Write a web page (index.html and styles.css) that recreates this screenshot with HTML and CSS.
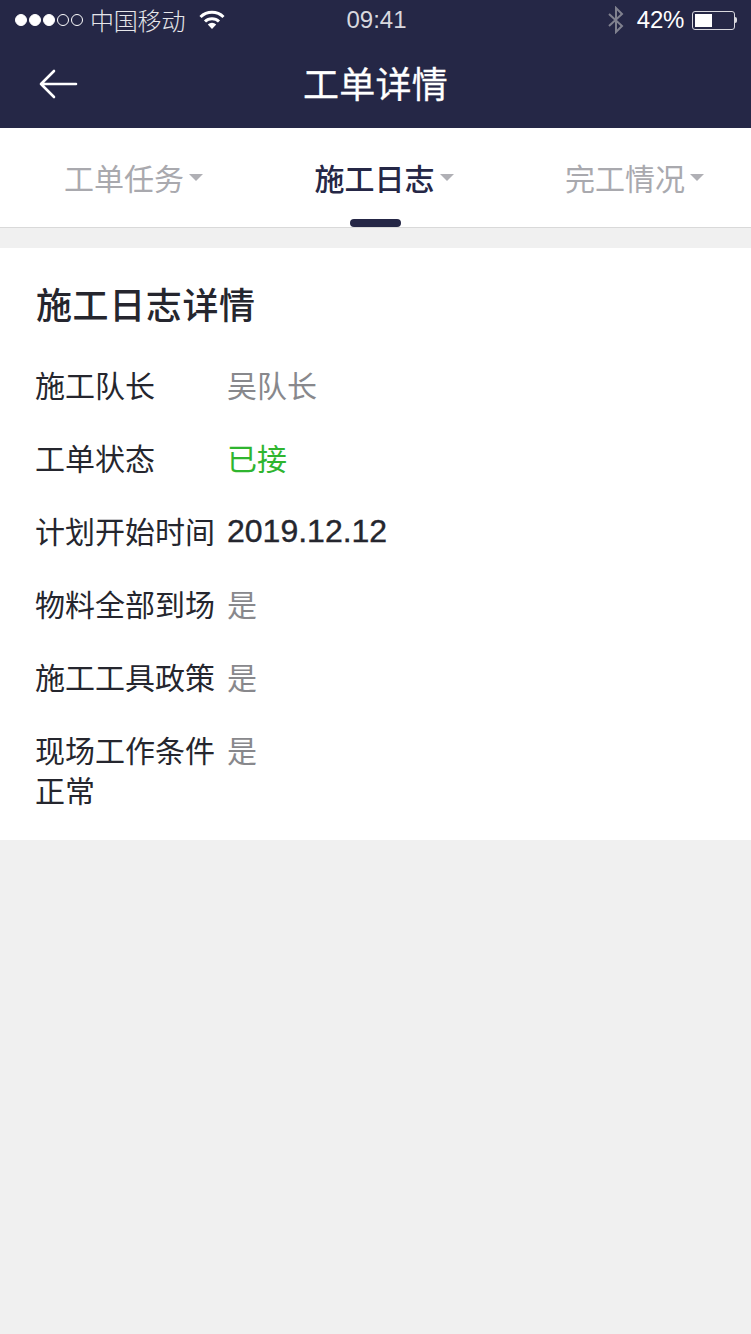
FILE: index.html
```html
<!DOCTYPE html>
<html lang="zh">
<head>
<meta charset="utf-8">
<title>工单详情</title>
<link rel="stylesheet" href="styles.css">
</head>
<body>
<header class="head">
  <div class="status">
    <div class="status-left">
      <span class="signal"><i class="dot on"></i><i class="dot on"></i><i class="dot on"></i><i class="dot"></i><i class="dot"></i></span>
      <span class="carrier">中国移动</span>
      <svg class="wifi" width="26" height="20" viewBox="0 0 26 20"><path d="M1.500 8a16.500 16.500 0 0 1 23 0" fill="none" stroke="#fff" stroke-width="3"/><path d="M6 12.500a10 10 0 0 1 14 0" fill="none" stroke="#fff" stroke-width="3"/><path d="M8.800 15.500a6 6 0 0 1 8.400 0L13 20z" fill="#fff"/></svg>
    </div>
    <span class="time">09:41</span>
    <div class="status-right">
      <svg class="bt" width="18" height="28" viewBox="0 0 18 28"><path d="M2 8l13 12-6 6V2l6 6L2 20" fill="none" stroke="#80818f" stroke-width="2"/></svg>
      <span class="pct">42%</span>
      <span class="battery"><span class="cell"><span class="fill"></span></span><span class="nub"></span></span>
    </div>
  </div>
  <div class="nav">
    <svg class="back" width="40" height="30" viewBox="0 0 40 30"><path d="M38 15H3M16 2L3 15l13 13" fill="none" stroke="#fff" stroke-width="2.600" stroke-linecap="round" stroke-linejoin="round"/></svg>
    <h1 class="title">工单详情</h1>
  </div>
</header>
<nav class="tabs">
  <div class="tab"><span>工单任务</span><i class="caret"></i></div>
  <div class="tab active"><span>施工日志</span><i class="caret"></i><i class="bar"></i></div>
  <div class="tab"><span>完工情况</span><i class="caret"></i></div>
</nav>
<main class="card">
  <h2 class="card-title">施工日志详情</h2>
  <dl class="rows">
    <div class="row"><dt>施工队长</dt><dd class="muted">吴队长</dd></div>
    <div class="row"><dt>工单状态</dt><dd class="green">已接</dd></div>
    <div class="row"><dt>计划开始时间</dt><dd class="date">2019.12.12</dd></div>
    <div class="row"><dt>物料全部到场</dt><dd class="muted">是</dd></div>
    <div class="row"><dt>施工工具政策</dt><dd class="muted">是</dd></div>
    <div class="row"><dt>现场工作条件正常</dt><dd class="muted">是</dd></div>
  </dl>
</main>
</body>
</html>
```
FILE: styles.css
```css
* { box-sizing: border-box; }
html, body { margin: 0; padding: 0; }
body {
  width: 751px;
  height: 1334px;
  overflow: hidden;
  background: #f0f0f0;
  font-family: "Noto Sans CJK SC", "Liberation Sans", sans-serif;
  color: #25262e;
}
.head { background: #252746; height: 128px; color: #fff; }
.status {
  height: 40px;
  display: grid;
  grid-template-columns: 1fr auto 1fr;
  align-items: center;
  padding: 0 13px 0 15px;
  font-size: 24px;
  font-weight: 300;
}
.status-left { display: flex; align-items: center; }
.signal { display: flex; gap: 2px; margin-right: 7px; }
.dot { width: 12px; height: 12px; border-radius: 50%; border: 1px solid #fff; }
.dot.on { background: #fff; }
.carrier { color: #e6e6ea; line-height: 40px; margin-top: -1px; letter-spacing: -0.2px; }
.wifi { margin-left: 14px; margin-top: -2px; }
.time { font-family: "Liberation Sans", sans-serif; color: #d8d8de; }
.status-right { display: flex; align-items: center; justify-content: flex-end; }
.bt { margin-right: 12px; }
.pct { font-family: "Liberation Sans", sans-serif; margin-right: 9px; letter-spacing: -0.3px; }
.battery { display: flex; align-items: center; margin-left: -1px; margin-right: 1px; }
.cell { width: 43px; height: 19px; border: 1px solid #d8d8de; border-radius: 3px; padding: 2px; display: block; }
.fill { display: block; width: 17px; height: 100%; background: #fff; }
.nub { width: 2px; height: 6px; background: #d8d8de; border-radius: 0 2px 2px 0; }
.nav { height: 88px; position: relative; display: flex; align-items: center; justify-content: center; }
.back { position: absolute; left: 38px; top: 29px; }
.title { margin: -4px 0 0; font-size: 36px; font-weight: 400; letter-spacing: 0.3px; line-height: 88px; -webkit-text-stroke: 0.3px #fff; }
.tabs {
  height: 100px;
  background: #fff;
  border-bottom: 1px solid #d9d9d9;
  display: flex;
  justify-content: space-between;
  padding: 0 47px 0 64px;
}
.tab {
  position: relative;
  display: flex;
  align-items: center;
  font-size: 30px;
  color: #a9a9ae;
  padding-bottom: 2px;
}
.tab.active { color: #252746; font-weight: 500; }
.caret {
  width: 0;
  height: 0;
  margin: 2px 0 0 5px;
  border-left: 7px solid transparent;
  border-right: 7px solid transparent;
  border-top: 7px solid #b0b0b5;
}
.bar {
  position: absolute;
  left: 35px;
  bottom: 0;
  width: 51px;
  height: 8px;
  border-radius: 4px;
  background: #252746;
}
.card { margin-top: 20px; background: #fff; padding: 30px 36px 0; height: 592px; }
.card-title { margin: -1px 0 0; font-size: 36px; font-weight: 500; letter-spacing: 0.6px; line-height: 52px; }
.rows { margin: 35px 0 0; }
.row { display: flex; margin-bottom: 33px; font-size: 30px; line-height: 40px; }
.row dt { width: 191px; flex: none; margin-left: -1px; margin-right: 1px; }
.row dd { margin: 0; }
.muted { color: #88888c; }
.green { color: #2fb52f; }
.row .date { font-family: "Liberation Sans", sans-serif; font-size: 32px; -webkit-text-stroke: 0.4px #25262e; line-height: 36px; margin-top: 3px; }
```
